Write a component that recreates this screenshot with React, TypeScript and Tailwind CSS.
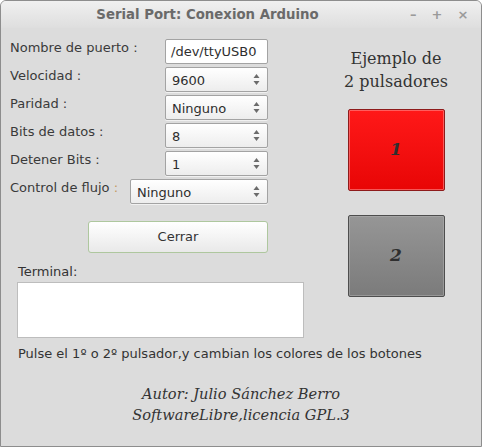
import React from "react";

const sans = { fontFamily: '"DejaVu Sans", Verdana, sans-serif' };
const serif = { fontFamily: '"DejaVu Serif", "Liberation Serif", serif' };

function Arrows() {
  return (
    <svg width="7" height="13" viewBox="0 0 7 13" className="shrink-0">
      <path d="M3.5 1 L6.5 5 L0.5 5 Z" fill="#6b6b6b" />
      <path d="M3.5 12 L6.5 8 L0.5 8 Z" fill="#6b6b6b" />
    </svg>
  );
}

function Spin({ value, width }: { value: string; width: string }) {
  return (
    <div
      className={`${width} h-[25px] flex items-center justify-between pl-[6px] pr-[7px] rounded-[2px] border border-[#a3a3a3] bg-gradient-to-b from-[#ffffff] to-[#ededed] text-[13px] text-[#2e2e2e] shadow-[0_1px_0_rgba(255,255,255,0.6)]`}
    >
      <span className="pt-[2px]">{value}</span>
      <Arrows />
    </div>
  );
}

function Row({ label, children, labelW = "w-[155px]" }: { label: React.ReactNode; children: React.ReactNode; labelW?: string }) {
  return (
    <div className="flex items-start h-[25px]">
      <div className={`${labelW} text-[13px] text-[#3a3a3a] leading-[16px] pt-[1px]`}>{label}</div>
      {children}
    </div>
  );
}

export default function App() {
  return (
    <div className="w-[482px] h-[447px] bg-[#dcdcdc] border border-[#8d8d8d] rounded-t-[6px] overflow-hidden flex flex-col" style={sans}>
      <div className="h-[27px] shrink-0 flex items-center bg-gradient-to-b from-[#f0f0f0] to-[#dedede] relative">
        <div className="w-[413px] text-center text-[13.3px] font-bold text-[#6a6a6a]">Serial Port: Conexion Arduino</div>
        <div className="flex items-center gap-[15px] text-[#9a9a9a] text-[13px] font-bold -ml-[4px]">
          <span>–</span>
          <span>+</span>
          <span>×</span>
        </div>
      </div>

      <div className="flex">
        <div className="w-[310px] pl-[9px] pt-[11px] flex flex-col">
          <div className="flex flex-col gap-[3px]">
            <Row label="Nombre de puerto :">
              <div className="w-[103px] h-[25px] flex items-center pl-[5px] bg-white border border-[#a3a3a3] rounded-[2px] text-[13px] text-[#2e2e2e]">
                /dev/ttyUSB0
              </div>
            </Row>
            <Row label="Velocidad :">
              <Spin value="9600" width="w-[103px]" />
            </Row>
            <Row label="Paridad :">
              <Spin value="Ninguno" width="w-[103px]" />
            </Row>
            <Row label="Bits de datos :">
              <Spin value="8" width="w-[103px]" />
            </Row>
            <Row label="Detener Bits :">
              <Spin value="1" width="w-[103px]" />
            </Row>
            <Row
              labelW="w-[120px]"
              label={
                <>
                  Control de flujo <span className="text-[#c49a62]">:</span>
                </>
              }
            >
              <Spin value="Ninguno" width="w-[138px]" />
            </Row>
          </div>

          <button className="ml-[78px] mt-[17px] w-[180px] h-[32px] rounded-[3px] border border-[#aec79e] bg-gradient-to-b from-[#ffffff] to-[#e9e9e9] text-[13px] text-[#333]">
            Cerrar
          </button>

          <div className="ml-[8px] mt-[11px] text-[13px] text-[#333] leading-[16px]">Terminal:</div>
          <div className="ml-[7px] mt-[2px] w-[287px] h-[56px] bg-white border border-[#bdbdbd]"></div>
        </div>

        <div className="flex-1 flex flex-col items-center pt-[19px]">
          <div className="text-[16px] leading-[23px] text-[#333] text-center" style={serif}>
            Ejemplo de
            <br />
            2 pulsadores
          </div>
          <div className="mt-[16px] w-[97px] h-[82px] flex items-center justify-center rounded-[2px] border border-[#8e1b1b] bg-gradient-to-b from-[#ff1818] to-[#e80505] shadow-[inset_0_0_0_1px_rgba(255,140,140,0.6)]">
            <span className="text-[17px] font-bold italic text-[#2f2f2f]" style={serif}>1</span>
          </div>
          <div className="mt-[24px] w-[97px] h-[82px] flex items-center justify-center rounded-[2px] border border-[#4e4e4e] bg-gradient-to-b from-[#969696] to-[#7b7b7b] shadow-[inset_0_0_0_1px_rgba(180,180,180,0.5)]">
            <span className="text-[17px] font-bold italic text-[#2f2f2f]" style={serif}>2</span>
          </div>
        </div>
      </div>

      <div className="pl-[17px] mt-[8px] text-[13px] leading-[16px] text-[#333]">
        Pulse el 1º o 2º pulsador,y cambian los colores de los botones
      </div>

      <div className="mt-[21px] text-center italic text-[14.6px] leading-[21px] text-[#333]" style={serif}>
        Autor: Julio Sánchez Berro
        <br />
        SoftwareLibre,licencia GPL.3
      </div>
    </div>
  );
}
